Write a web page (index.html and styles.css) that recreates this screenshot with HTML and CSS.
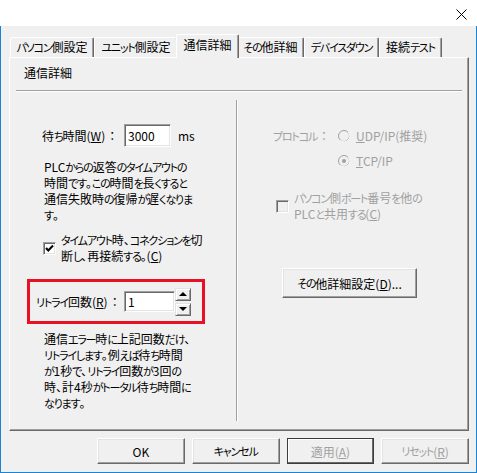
FILE: index.html
```html
<!DOCTYPE html>
<html lang="ja">
<head>
<meta charset="utf-8">
<link rel="stylesheet" href="styles.css">
</head>
<body>
<div class="window">
  <div class="titlebar">
    <svg class="close" width="11" height="11" viewBox="0 0 11 11"><path d="M0.5 0.5 L10.5 10.5 M10.5 0.5 L0.5 10.5" stroke="#000" stroke-width="1" fill="none"/></svg>
  </div>
  <div class="client">
    <div class="tabs">
      <div class="tab w1">パソコン側設定</div>
      <div class="tab w2">ユニット側設定</div>
      <div class="tab sel">通信詳細</div>
      <div class="tab w4">その他詳細</div>
      <div class="tab w5">デバイスダウン</div>
      <div class="tab w6">接続テスト</div>
    </div>
    <div class="panel">
      <div class="group-title">通信詳細</div>
      <div class="hsep"></div>
      <div class="cols">
        <div class="left">
          <div class="field-row">
            <span class="lbl lbl-wait">待ち時間(<u>W</u>)<span class="colon">：</span></span>
            <span class="textbox tb-wait">3000</span>
            <span class="unit">ms</span>
          </div>
          <p class="para">PLCからの返答のタイムアウトの<br>時間です。この時間を長くすると<br>通信失敗時の復帰が遅くなりま<br>す。</p>
          <div class="check-row">
            <span class="cb"><svg width="9" height="9" viewBox="0 0 9 9"><path d="M1 4 L3.3 6.5 L8 1.5" stroke="#000" stroke-width="2" fill="none"/></svg></span>
            <span class="cb-label">タイムアウト時、コネクションを切<br>断し、再接続する。(<u>C</u>)</span>
          </div>
          <div class="retry">
            <span class="lbl lbl-retry">リトライ回数(<u>R</u>)<span class="colon">：</span></span>
            <span class="textbox tb-retry">1</span>
            <span class="spin">
              <span class="spin-btn"><span class="tri-up"></span></span>
              <span class="spin-btn"><span class="tri-down"></span></span>
            </span>
          </div>
          <p class="para para2">通信エラー時に上記回数だけ、<br>リトライします。例えば待ち時間<br>が1秒で、リトライ回数が3回の<br>時、計4秒がトータル待ち時間に<br>なります。</p>
        </div>
        <div class="vsep"></div>
        <div class="right">
          <div class="proto">
            <span class="dis">プロトコル<span class="colon">：</span></span>
            <span class="radio-item">
              <svg class="radio" width="12" height="12" viewBox="0 0 12 12"><circle cx="6" cy="6" r="5.5" fill="#f0f0f0" stroke="#a0a0a0"/><path d="M10.2 2.2 A5.5 5.5 0 0 1 2.2 10.2" stroke="#fff" fill="none"/></svg>
              <span class="dis"><u>U</u>DP/IP(推奨)</span>
            </span>
            <span></span>
            <span class="radio-item">
              <svg class="radio" width="12" height="12" viewBox="0 0 12 12"><circle cx="6" cy="6" r="5.5" fill="#f0f0f0" stroke="#a0a0a0"/><path d="M10.2 2.2 A5.5 5.5 0 0 1 2.2 10.2" stroke="#fff" fill="none"/><circle cx="6" cy="6" r="2" fill="#a0a0a0"/></svg>
              <span class="dis"><u>T</u>CP/IP</span>
            </span>
          </div>
          <div class="check-row check2">
            <span class="cb cb-dis"></span>
            <span class="cb-label dis">パソコン側ポート番号を他の<br>PLCと共用する(<u>C</u>)</span>
          </div>
          <div class="btn btn-more">その他詳細設定(<u>D</u>)...</div>
        </div>
      </div>
    </div>
    <div class="buttons">
      <div class="btn">OK</div>
      <div class="btn">キャンセル</div>
      <div class="btn default dis">適用(<u>A</u>)</div>
      <div class="btn dis">リセット(<u>R</u>)</div>
    </div>
  </div>
</div>
<script src="script.js"></script>
</body>
</html>
```

FILE: script.js
```js
// Meiryo UI draws kana narrower than kanji; mark kana runs so CSS can narrow them.
(function () {
  var KANA = /([\u3041-\u30ff]+)/;
  function wrap(node) {
    Array.prototype.slice.call(node.childNodes).forEach(function (child) {
      if (child.nodeType === 3) {
        var text = child.nodeValue;
        if (!KANA.test(text)) return;
        var frag = document.createDocumentFragment();
        text.split(KANA).forEach(function (part, i) {
          if (!part) return;
          if (i % 2) {
            var s = document.createElement('span');
            s.className = 'kana';
            s.textContent = part;
            frag.appendChild(s);
          } else {
            frag.appendChild(document.createTextNode(part));
          }
        });
        child.parentNode.replaceChild(frag, child);
      } else if (child.nodeType === 1 && child.namespaceURI === 'http://www.w3.org/1999/xhtml' && child.tagName !== 'SCRIPT') {
        wrap(child);
      }
    });
  }
  wrap(document.body);
})();
```

FILE: styles.css
```css
* { box-sizing: border-box; }
html, body { margin: 0; padding: 0; }
body {
  width: 477px;
  height: 473px;
  background: #fff;
  font-family: "Noto Sans CJK JP", "Noto Sans", sans-serif;
  font-size: 12px;
  color: #000;
  font-feature-settings: "palt";
}
.kana { font-size: 11px; letter-spacing: -1.2px; }
.colon { margin-left: 4px; }
u { text-decoration: underline; text-underline-offset: 1px; }
.window { width: 477px; height: 473px; display: flex; flex-direction: column; }
.titlebar {
  height: 26px;
  background: #fff;
  display: flex;
  justify-content: flex-end;
  align-items: flex-start;
  padding: 9px 10px 0 0;
}
.close { display: block; }
.client {
  flex: 1;
  background: #f0f0f0;
  border: 1px solid #1883d7;
  border-top: none;
  padding: 8px 7px 0 8px;
  display: flex;
  flex-direction: column;
}
.tabs {
  display: flex;
  align-items: flex-end;
  height: 23px;
  padding-left: 1px;
  position: relative;
  z-index: 1;
}
.tab {
  height: 20px;
  line-height: 17px;
  text-align: center;
  white-space: nowrap;
  background: #f0f0f0;
  border-top: 1px solid #fff;
  border-left: 1px solid #fff;
  border-right: 1px solid #696969;
  box-shadow: inset -1px 0 #a0a0a0;
  border-radius: 2px 2px 0 0;
}
.w1 { width: 84px; }
.w2 { width: 84px; }
.w4 { width: 67px; }
.w5 { width: 75px; }
.w6 { width: 63px; }
.tab.sel {
  width: 63px;
  height: 24px;
  line-height: 20px;
  margin: 0 -2px -1px -2px;
  position: relative;
  z-index: 2;
}
.panel {
  height: 374px;
  border: 1px solid;
  border-color: #fff #696969 #696969 #fff;
  box-shadow: inset -1px -1px #a0a0a0;
  display: flex;
  flex-direction: column;
}
.group-title { margin: 7px 0 0 14px; line-height: 16px; }
.hsep {
  margin: 9px 0 0 6px;
  width: 446px;
  height: 2px;
  border-top: 1px solid #a0a0a0;
  border-bottom: 1px solid #fff;
}
.cols { display: flex; flex: 1; }
.left { width: 226px; padding-top: 32px; }
.vsep {
  width: 2px;
  height: 321px;
  margin-top: 8px;
  border-left: 1px solid #a0a0a0;
  border-right: 1px solid #fff;
}
.right { flex: 1; padding-top: 36px; }
.field-row { display: flex; align-items: center; margin-left: 32px; height: 23px; }
.lbl { white-space: nowrap; }
.lbl-wait { width: 82px; }
.textbox {
  background: #fff;
  border-style: solid;
  border-width: 1px;
  border-color: #a0a0a0 #fff #fff #a0a0a0;
  box-shadow: inset 1px 1px #696969, inset -1px -1px #e3e3e3;
  padding-left: 3px;
  display: flex;
  align-items: center;
  line-height: 16px;
}
.tb-wait { width: 47px; height: 23px; }
.unit { margin-left: 7px; }
.para { margin: 12px 0 0 34px; line-height: 16px; white-space: nowrap; }
.check-row { display: flex; align-items: center; margin: 9px 0 0 33px; }
.cb {
  width: 13px;
  height: 13px;
  flex: none;
  background: #fff;
  border-style: solid;
  border-width: 1px;
  border-color: #a0a0a0 #fff #fff #a0a0a0;
  box-shadow: inset 1px 1px #696969, inset -1px -1px #e3e3e3;
  margin-right: 5px;
  display: flex;
  align-items: center;
  justify-content: center;
}
.cb svg { display: block; }
.cb-dis { background: #f0f0f0; }
.cb-label { line-height: 16px; white-space: nowrap; }
.retry {
  margin: 15px 0 0 17px;
  width: 178px;
  height: 45px;
  border: 3px solid #e81123;
  padding-left: 6px;
  display: flex;
  align-items: center;
}
.lbl-retry { width: 88px; }
.tb-retry { width: 51px; height: 21px; }
.spin { width: 16px; height: 28px; display: flex; flex-direction: column; justify-content: space-between; }
.spin-btn {
  height: 13px;
  background: #f0f0f0;
  border: 1px solid;
  border-color: #e3e3e3 #696969 #696969 #e3e3e3;
  box-shadow: inset 1px 1px #fff, inset -1px -1px #a0a0a0;
  display: flex;
  align-items: center;
  justify-content: center;
}
.tri-up { width: 0; height: 0; border-left: 4px solid transparent; border-right: 4px solid transparent; border-bottom: 4px solid #000; }
.tri-down { width: 0; height: 0; border-left: 4px solid transparent; border-right: 4px solid transparent; border-top: 4px solid #000; }
.para2 { margin-top: 7px; }
.dis { color: #a0a0a0; }
.proto {
  display: grid;
  grid-template-columns: 65px auto;
  grid-auto-rows: 16px;
  row-gap: 9px;
  padding-left: 35px;
  line-height: 16px;
  white-space: nowrap;
}
.radio-item { display: flex; align-items: center; }
.radio { display: block; margin-right: 6px; }
.check2 { margin: 21px 0 0 38px; }
.btn {
  height: 26px;
  width: 88px;
  background: #f0f0f0;
  border: 1px solid;
  border-color: #fff #696969 #696969 #fff;
  box-shadow: inset -1px -1px #a0a0a0, inset 1px 1px #e3e3e3;
  display: flex;
  align-items: center;
  justify-content: center;
  white-space: nowrap;
}
.btn.default { border-color: #3c3c3c; box-shadow: inset -1px -1px #696969, inset 1px 1px #fff; }
.btn-more { margin: 46px 0 0 44px; width: 135px; height: 30px; }
.buttons { display: flex; gap: 7px; margin: 7px 0 0 88px; }
```
